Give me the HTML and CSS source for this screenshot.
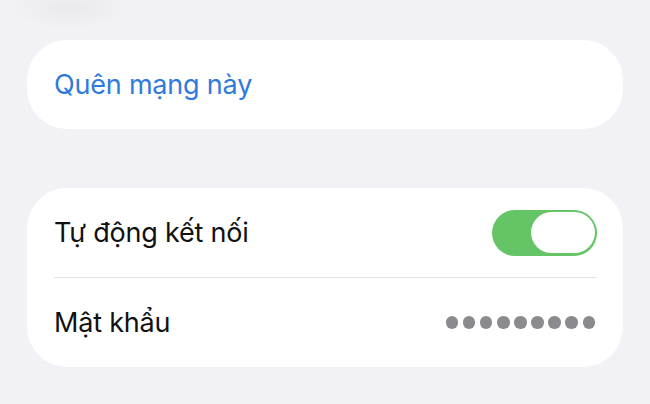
FILE: index.html
```html
<!DOCTYPE html>
<html lang="vi">
<head>
  <meta charset="UTF-8">
  <meta name="viewport" content="width=device-width, initial-scale=1.0">
  <title>Wi-Fi</title>
  <link rel="stylesheet" href="styles.css">
</head>
<body>
  <div class="page">
    <div class="group">
      <div class="row">
        <span class="link">Quên mạng này</span>
      </div>
    </div>

    <div class="group">
      <div class="row">
        <span class="label">Tự động kết nối</span>
        <span class="toggle on"><span class="knob"></span></span>
      </div>
      <div class="divider"></div>
      <div class="row">
        <span class="label">Mật khẩu</span>
        <span class="dots">
          <i></i><i></i><i></i><i></i><i></i><i></i><i></i><i></i><i></i>
        </span>
      </div>
    </div>
  </div>
</body>
</html>
```

FILE: styles.css
```css
body {
  margin: 0;
  padding: 0;
  font-family: Inter, "Noto Sans", sans-serif;
  background-color: #f1f1f6;
  background-image: radial-gradient(ellipse 60px 22px at 70px 8px, rgba(0, 0, 0, 0.035), rgba(0, 0, 0, 0));
  height: 404px;
  overflow: hidden;
}
.page {
  padding: 40px 27px 0;
  display: flex;
  flex-direction: column;
  gap: 59px;
}
.group {
  background: #fff;
  border-radius: 40px;
  padding: 0 26px 0 27px;
}
.row {
  height: 89px;
  display: flex;
  align-items: center;
  justify-content: space-between;
}
.link {
  color: #2f7ade;
  font-size: 27px;
  letter-spacing: -0.2px;
}
.label {
  color: #111;
  font-size: 27px;
  letter-spacing: -0.2px;
}
.divider {
  height: 1px;
  background: #e2e2e6;
}
.toggle {
  width: 105px;
  height: 46px;
  border-radius: 23px;
  background: #65c466;
  display: flex;
  align-items: center;
  justify-content: flex-end;
  padding: 0 2px;
  box-sizing: border-box;
}
.knob {
  width: 64px;
  height: 41px;
  border-radius: 21px;
  background: #fff;
}
.dots {
  display: flex;
  gap: 4.6px;
  margin-right: 2px;
}
.dots i {
  width: 12.5px;
  height: 12.5px;
  border-radius: 50%;
  background: #8b8b8f;
}
```
